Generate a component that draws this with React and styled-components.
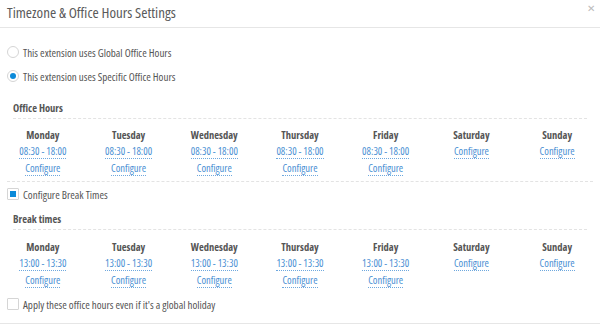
import React from "react";
import styled, { createGlobalStyle } from "styled-components";

const Global = createGlobalStyle`
  html, body { margin: 0; padding: 0; background: #fff; }
  body { font-family: "Open Sans", "Lato", sans-serif; font-stretch: 82%; color: #555; }
`;

const Modal = styled.div`
  width: 600px;
  height: 327px;
  background: #fff;
  overflow: hidden;
  box-sizing: border-box;
`;

const Header = styled.div`
  height: 28px;
  box-sizing: border-box;
  border-bottom: 1px solid #e6e6e6;
  display: flex;
  align-items: center;
  justify-content: space-between;
  padding: 0 5px 0 7px;
`;

const Title = styled.div`
  font-size: 15px;
  font-stretch: 80%;
  color: #5a5a5a;
  line-height: 20px;
  margin-top: -4px;
`;

const Close = styled.div`
  font-size: 10px;
  color: #bbb;
  line-height: 10px;
  margin-top: -12px;
`;

const Body = styled.div`
  padding: 12px 7px 0;
  border-bottom: 1px solid #e6e6e6;
  height: 296px;
  box-sizing: border-box;
`;

const OptionRow = styled.label`
  display: flex;
  align-items: center;
  height: 24px;
  gap: 4px;
  font-size: 11px;
  font-stretch: 83%;
  color: #555;
`;

const Radio = styled.span`
  width: 10px;
  height: 10px;
  border-radius: 50%;
  border: 1px solid #d5d5d5;
  display: flex;
  align-items: center;
  justify-content: center;
  flex: none;
  &::after {
    content: "";
    width: 6px;
    height: 6px;
    border-radius: 50%;
    background: ${(p) => (p.checked ? "#0b8ad9" : "transparent")};
  }
`;

const Check = styled.span`
  width: 10px;
  height: 10px;
  border: 1px solid #d5d5d5;
  border-radius: 1px;
  display: flex;
  align-items: center;
  justify-content: center;
  flex: none;
  &::after {
    content: "";
    width: 6px;
    height: 6px;
    background: ${(p) => (p.checked ? "#0b8ad9" : "transparent")};
  }
`;

const SectionTitle = styled.div`
  font-size: 10.5px;
  font-weight: 700;
  color: #555;
  padding-left: 6px;
  height: 20px;
  line-height: 20px;
  margin-top: ${(p) => p.$top || 0}px;
`;

const Dashed = styled.div`
  margin: ${(p) => p.$m || "0 6px"};
  border-top: 1px dashed #e3e3e3;
`;

const Days = styled.div`
  display: grid;
  grid-template-columns: repeat(7, 1fr);
  margin: 0 -7px;
  padding: ${(p) => p.$pad};
`;

const Day = styled.div`
  display: flex;
  flex-direction: column;
  align-items: center;
`;

const DayName = styled.div`
  font-size: 10.5px;
  font-weight: 700;
  font-stretch: 80%;
  color: #555;
  height: 14px;
  line-height: 14px;
`;

const Link = styled.a`
  font-size: 10.5px;
  font-stretch: 80%;
  color: #4a8fd3;
  text-decoration: none;
  border-bottom: 1px dotted #6ea8de;
  line-height: 14px;
  margin-top: 2px;
`;

const days = ["Monday", "Tuesday", "Wednesday", "Thursday", "Friday", "Saturday", "Sunday"];

function DayGrid({ time, pad }) {
  return (
    <Days $pad={pad}>
      {days.map((d, i) => (
        <Day key={d}>
          <DayName>{d}</DayName>
          {i < 5 && <Link>{time}</Link>}
          <Link>Configure</Link>
        </Day>
      ))}
    </Days>
  );
}

export default function App() {
  return (
    <>
      <Global />
      <Modal>
        <Header>
          <Title>Timezone &amp; Office Hours Settings</Title>
          <Close>✕</Close>
        </Header>
        <Body>
          <OptionRow>
            <Radio />
            This extension uses Global Office Hours
          </OptionRow>
          <OptionRow>
            <Radio checked />
            This extension uses Specific Office Hours
          </OptionRow>
          <SectionTitle $top={10}>Office Hours</SectionTitle>
          <Dashed />
          <DayGrid time="08:30 - 18:00" pad="9px 0 5px" />
          <Dashed $m="0" />
          <OptionRow>
            <Check checked />
            Configure Break Times
          </OptionRow>
          <SectionTitle $top={3}>Break times</SectionTitle>
          <Dashed />
          <DayGrid time="13:00 - 13:30" pad="10px 0 4px" />
          <OptionRow>
            <Check />
            Apply these office hours even if it's a global holiday
          </OptionRow>
        </Body>
      </Modal>
    </>
  );
}
